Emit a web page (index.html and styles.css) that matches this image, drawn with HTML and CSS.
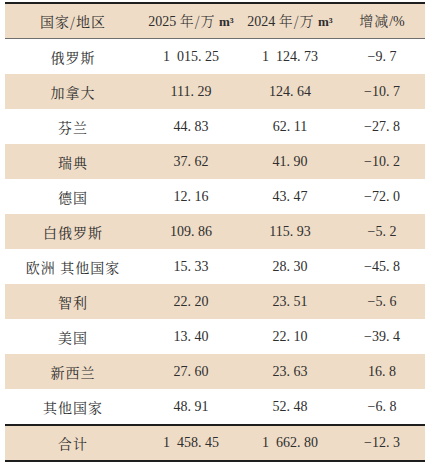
FILE: index.html
```html
<!DOCTYPE html>
<html lang="zh-CN">
<head>
<meta charset="utf-8">
<link rel="stylesheet" href="styles.css">
</head>
<body>
<div class="wrap">
<table class="data">
  <colgroup>
    <col class="c1"><col class="c2"><col class="c3"><col class="c4">
  </colgroup>
  <thead>
    <tr><th class="cjk">国家/地区</th><th><span class="num">2025</span> <span class="cjk">年/万</span> <span class="unit">m³</span></th><th><span class="num">2024</span> <span class="cjk">年/万</span> <span class="unit">m³</span></th><th><span class="cjk">增减</span><span class="num">/%</span></th></tr>
  </thead>
  <tbody>
    <tr><td class="cjk">俄罗斯</td><td class="num">1 015<span class="pt">.</span>25</td><td class="num">1 124<span class="pt">.</span>73</td><td class="num">−9<span class="pt">.</span>7</td></tr>
    <tr class="alt"><td class="cjk">加拿大</td><td class="num">111<span class="pt">.</span>29</td><td class="num">124<span class="pt">.</span>64</td><td class="num">−10<span class="pt">.</span>7</td></tr>
    <tr><td class="cjk">芬兰</td><td class="num">44<span class="pt">.</span>83</td><td class="num">62<span class="pt">.</span>11</td><td class="num">−27<span class="pt">.</span>8</td></tr>
    <tr class="alt"><td class="cjk">瑞典</td><td class="num">37<span class="pt">.</span>62</td><td class="num">41<span class="pt">.</span>90</td><td class="num">−10<span class="pt">.</span>2</td></tr>
    <tr><td class="cjk">德国</td><td class="num">12<span class="pt">.</span>16</td><td class="num">43<span class="pt">.</span>47</td><td class="num">−72<span class="pt">.</span>0</td></tr>
    <tr class="alt"><td class="cjk">白俄罗斯</td><td class="num">109<span class="pt">.</span>86</td><td class="num">115<span class="pt">.</span>93</td><td class="num">−5<span class="pt">.</span>2</td></tr>
    <tr><td class="cjk">欧洲&nbsp;其他国家</td><td class="num">15<span class="pt">.</span>33</td><td class="num">28<span class="pt">.</span>30</td><td class="num">−45<span class="pt">.</span>8</td></tr>
    <tr class="alt"><td class="cjk">智利</td><td class="num">22<span class="pt">.</span>20</td><td class="num">23<span class="pt">.</span>51</td><td class="num">−5<span class="pt">.</span>6</td></tr>
    <tr><td class="cjk">美国</td><td class="num">13<span class="pt">.</span>40</td><td class="num">22<span class="pt">.</span>10</td><td class="num">−39<span class="pt">.</span>4</td></tr>
    <tr class="alt"><td class="cjk">新西兰</td><td class="num">27<span class="pt">.</span>60</td><td class="num">23<span class="pt">.</span>63</td><td class="num">16<span class="pt">.</span>8</td></tr>
    <tr><td class="cjk">其他国家</td><td class="num">48<span class="pt">.</span>91</td><td class="num">52<span class="pt">.</span>48</td><td class="num">−6<span class="pt">.</span>8</td></tr>
  </tbody>
  <tfoot>
    <tr><td class="cjk">合计</td><td class="num">1 458<span class="pt">.</span>45</td><td class="num">1 662<span class="pt">.</span>80</td><td class="num">−12<span class="pt">.</span>3</td></tr>
  </tfoot>
</table>
</div>
</body>
</html>
```

FILE: styles.css
```css
html, body {
  margin: 0;
  padding: 0;
  background: #ffffff;
}

.wrap {
  padding: 2px 4px 0 5px;
}

.data {
  width: 420px;
  border-collapse: collapse;
  table-layout: fixed;
  color: #2e2e2e;
  font-size: 14px;
  line-height: 18px;
}

.c1 { width: 136px; }
.c2 { width: 100px; }
.c3 { width: 98px; }
.c4 { width: 86px; }

.data th,
.data td {
  padding: 0;
  height: 35px;
  text-align: center;
  vertical-align: middle;
  font-weight: normal;
  white-space: nowrap;
}

.data thead tr {
  background: #eedcc6;
  border-top: 2px solid #1e1e1e;
  border-bottom: 1px solid #6f6f6f;
}

.data thead th {
  height: 34px;
}

.data tbody tr.alt {
  background: #eedcc6;
}

.data tfoot tr {
  background: #eedcc6;
  border-top: 2px solid #1e1e1e;
  border-bottom: 2px solid #1e1e1e;
}

.data tfoot td {
  height: 34px;
}

.cjk {
  font-family: "Noto Serif CJK SC", "Noto Sans CJK SC", serif;
  font-weight: 300;
  letter-spacing: 1px;
}

.num {
  font-family: "Liberation Serif", serif;
  word-spacing: 3.5px;
  letter-spacing: 0;
}

.unit {
  font-family: "Liberation Serif", serif;
  font-weight: bold;
  font-size: 13px;
}

.pt {
  display: inline-block;
  width: 7px;
  text-align: left;
}
```
